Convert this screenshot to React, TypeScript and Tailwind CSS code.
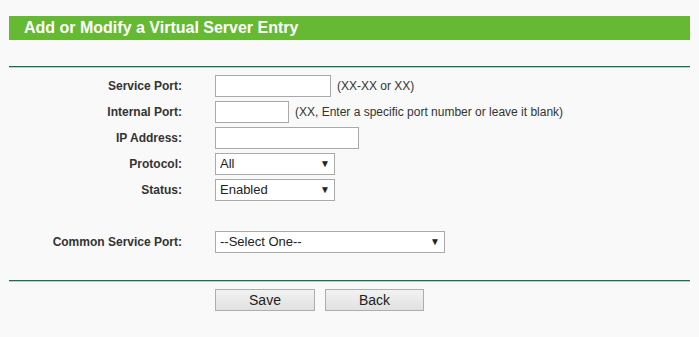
import React from 'react';

// --- Small form controls mimicking the router admin page ---
function TextBox({ width }: { width: string }) {
    return <div className={`${width} h-[22px] bg-white border border-[#a9a9a9]`} />;
}

function FakeSelect({ width, value }: { width: string; value: string }) {
    return (
        <div className={`${width} h-[22px] bg-white border border-[#a9a9a9] flex items-center justify-between pl-[4px] pr-[4px] text-[13px] text-[#222]`}>
            <span>{value}</span>
            <span className="text-[10px] leading-none">▼</span>
        </div>
    );
}

function Label({ children }: { children: React.ReactNode }) {
    return <div className="h-[22px] flex items-center justify-end text-[12px] font-bold text-[#333]">{children}</div>;
}

function Hint({ children }: { children: React.ReactNode }) {
    return <span className="ml-[6px] text-[12px] text-[#333]">{children}</span>;
}

function Divider() {
    return (
        <div>
            <div className="h-px bg-[#1f6b50]" />
            <div className="h-px bg-[#a8d8bd]" />
        </div>
    );
}

function GrayButton({ label, width }: { label: string; width: string }) {
    return (
        <button className={`${width} h-[22px] border border-[#adadad] bg-gradient-to-b from-[#f2f2f2] to-[#e1e1e1] text-[14px] text-[#222] leading-none`}>
            {label}
        </button>
    );
}

export default function App() {
    return (
        <div className="w-full h-[337px] bg-[#f9f9f9] pt-[16px] px-[9px] font-['Liberation_Sans',Arial,sans-serif]">
            <div className="h-[24px] bg-[#66b933] flex items-center pl-[15px] text-white text-[16px] font-bold">
                Add or Modify a Virtual Server Entry
            </div>

            <div className="mt-[26px]">
                <Divider />
            </div>

            <div className="mt-[7px] grid grid-cols-[173px_1fr] gap-x-[33px] gap-y-[4px]">
                <Label>Service Port:</Label>
                <div className="flex items-center">
                    <TextBox width="w-[116px]" />
                    <Hint>(XX-XX or XX)</Hint>
                </div>

                <Label>Internal Port:</Label>
                <div className="flex items-center">
                    <TextBox width="w-[74px]" />
                    <Hint>(XX, Enter a specific port number or leave it blank)</Hint>
                </div>

                <Label>IP Address:</Label>
                <div className="flex items-center">
                    <TextBox width="w-[144px]" />
                </div>

                <Label>Protocol:</Label>
                <div className="flex items-center">
                    <FakeSelect width="w-[120px]" value="All" />
                </div>

                <Label>Status:</Label>
                <div className="flex items-center">
                    <FakeSelect width="w-[120px]" value="Enabled" />
                </div>
            </div>

            <div className="mt-[30px] grid grid-cols-[173px_1fr] gap-x-[33px]">
                <Label>Common Service Port:</Label>
                <div className="flex items-center">
                    <FakeSelect width="w-[230px]" value="--Select One--" />
                </div>
            </div>

            <div className="mt-[27px]">
                <Divider />
            </div>

            <div className="mt-[7px] pl-[206px] flex gap-[10px]">
                <GrayButton label="Save" width="w-[100px]" />
                <GrayButton label="Back" width="w-[99px]" />
            </div>
        </div>
    );
}
